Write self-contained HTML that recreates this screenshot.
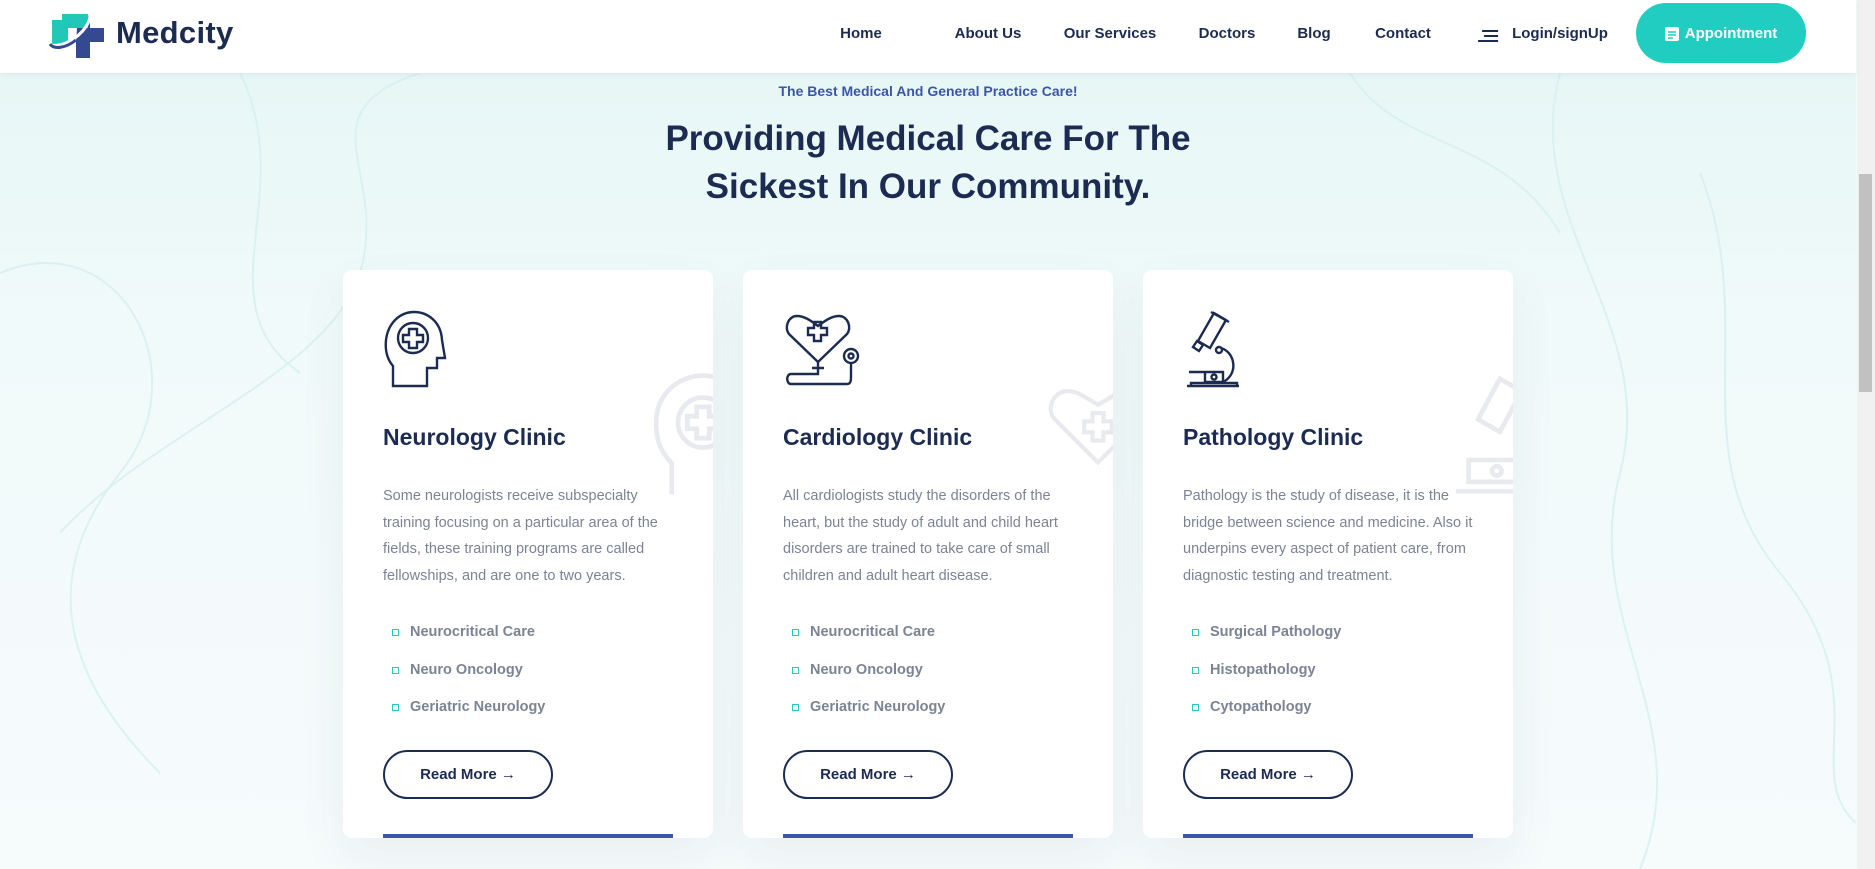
<!DOCTYPE html>
<html><head><meta charset="utf-8">
<style>
*{margin:0;padding:0;box-sizing:border-box}
html,body{width:1875px;height:869px;overflow:hidden}
body{font-family:"Liberation Sans",sans-serif;background:#f3fbfb;position:relative}
.bg{position:absolute;left:0;top:0;width:1856px;height:869px;background:linear-gradient(180deg,#e4f6f5 0%,#f1fafa 40%,#f6fbfc 100%)}
header{position:absolute;left:0;top:0;width:1856px;height:73px;background:#fff;box-shadow:0 2px 6px rgba(0,0,0,.05);z-index:5}
.logo{position:absolute;left:48px;top:10px}
.logotext{position:absolute;left:116px;top:15px;font-size:31px;font-weight:600;color:#1c2b51;letter-spacing:.3px}
nav a{position:absolute;top:25px;font-size:15px;font-weight:700;color:#1c2b51;text-decoration:none;transform:translateX(-50%);white-space:nowrap}
.appt{position:absolute;left:1636px;top:3px;width:170px;height:60px;border-radius:30px;background:#21cdc0;color:#fff;font-weight:700;font-size:15px;display:flex;align-items:center;justify-content:center;gap:6px}
.scroll{position:absolute;left:1857px;top:0;width:18px;height:869px;background:#f1f1f1}
.thumb{position:absolute;left:1859px;top:174px;width:13px;height:218px;background:#c1c1c1}
.sub{position:absolute;top:83px;width:1856px;text-align:center;font-size:14px;font-weight:700;color:#3b56a6}
h1{position:absolute;top:115px;width:1856px;text-align:center;font-size:35px;line-height:48px;font-weight:700;color:#1c2b51}
.card{position:absolute;top:270px;width:370px;height:568px;background:#fff;border-radius:9px;box-shadow:0 20px 50px rgba(30,60,90,.06);overflow:hidden}
.card .ic{position:absolute;left:40px;top:40px}
.card .ghost{position:absolute;right:-40px;top:100px;opacity:1}
.card h3{position:absolute;left:40px;top:154px;font-size:23px;font-weight:700;color:#1c2b51}
.card p{position:absolute;left:40px;top:213px;width:300px;font-size:14.5px;line-height:26.5px;color:#7b8394}
.card ul{position:absolute;left:40px;top:354px;list-style:none}
.card li{font-size:14.5px;font-weight:700;color:#7b8394;height:37.5px;position:relative;padding-left:27px}
.card li:before{content:"";position:absolute;left:9px;top:5px;width:5px;height:5px;border:1px solid #21cdc0}
.btn{position:absolute;left:40px;top:480px;width:170px;height:49px;border:2px solid #1c2b51;border-radius:25px;font-size:15px;font-weight:700;color:#1c2b51;display:flex;align-items:center;justify-content:center}
.bar{position:absolute;left:40px;top:564px;width:290px;height:4px;background:#3b56a6}
</style></head><body>
<div class="bg"></div>
<svg style="position:absolute;left:0;top:73px" width="1856" height="796" fill="none" stroke="#d6f0ee" stroke-width="2" opacity=".8">
<path d="M0 200 C120 150 200 300 120 400 S 60 600 160 700"/>
<path d="M60 460 C150 360 330 300 360 200 S 300 40 420 0"/>
<path d="M1560 0 C1520 150 1660 250 1620 400 S 1700 650 1640 796"/>
<path d="M1700 100 C1760 250 1680 380 1780 500 S 1800 700 1856 750"/>
<path d="M240 0 C300 120 200 230 300 300"/>
<path d="M1350 0 C1400 80 1500 60 1560 160"/>
</svg>
<header>
<svg class="logo" width="58" height="50" viewBox="0 0 58 50">
<path d="M30 4h12v14h14v14H42v16H28V32" fill="#34498f"/>
<path d="M14 4h26v14H14z" fill="#21c7b7"/><path d="M4 10h16v24H4z" fill="#21c7b7"/>
<path d="M40 2c6 6-4 22-20 30-8 4-16 4-18 2" stroke="#fff" stroke-width="3" fill="none"/>
<path d="M2 34c4 6 16 4 26-4" stroke="#34498f" stroke-width="3" fill="none"/>
</svg>
<div class="logotext">Medcity</div>
<nav>
<a style="left:861px">Home</a><a style="left:988px">About Us</a><a style="left:1110px">Our Services</a><a style="left:1227px">Doctors</a><a style="left:1314px">Blog</a><a style="left:1403px">Contact</a>
<a style="left:1543px"><span style="display:inline-block;vertical-align:middle;margin-right:14px;width:20px"><span style="display:block;height:2px;background:#1c2b51;margin:3px 0 3px 4px;width:16px"></span><span style="display:block;height:2px;background:#1c2b51;width:14px;margin:3px 0 3px 6px"></span><span style="display:block;height:2px;background:#1c2b51;width:20px"></span></span>Login/signUp</a>
</nav>
<div class="appt"><svg width="14" height="16" viewBox="0 0 14 16"><rect x="0" y="2" width="14" height="14" rx="2" fill="#fff"/><path d="M3 7h8M3 10h8M3 13h5" stroke="#21cdc0" stroke-width="1.5"/></svg>Appointment</div>
</header>
<div class="sub">The Best Medical And General Practice Care!</div>
<h1>Providing Medical Care For The<br>Sickest In Our Community.</h1>

<div class="card" style="left:343px">
<svg class="ghost" width="100" height="130" viewBox="0 0 64 80" fill="none" stroke="#e8eaef" stroke-width="3"><path d="M12 78V58C4 50 2 42 2 32 2 14 16 2 32 2s28 12 28 30l6 14h-6v12h-8v20"/><circle cx="32" cy="32" r="16"/><path d="M28 22h8v6h6v8h-6v6h-8v-6h-6v-8h6z"/></svg>
<svg class="ic" width="64" height="78" viewBox="0 0 64 78" fill="none" stroke="#1c2b51" stroke-width="2.4"><path d="M10 76V56C4 49 2 40 3 30 5 13 17 2 31 2s27 10 28 28l3 18h-8v10h-10v18z"/><circle cx="30" cy="28" r="15"/><path d="M26 19h8v6h6v7h-6v6h-8v-6h-6v-7h6z"/></svg>
<h3>Neurology Clinic</h3>
<p>Some neurologists receive subspecialty training focusing on a particular area of the fields, these training programs are called fellowships, and are one to two years.</p>
<ul><li>Neurocritical Care</li><li>Neuro Oncology</li><li>Geriatric Neurology</li></ul>
<div class="btn">Read More →</div><div class="bar"></div>
</div>

<div class="card" style="left:743px">
<svg class="ghost" width="110" height="130" viewBox="0 0 80 80" fill="none" stroke="#e8eaef" stroke-width="3"><path d="M40 60L8 28C2 20 8 8 18 8c8 0 14 6 22 10 8-4 14-10 22-10 10 0 16 12 10 20z"/><path d="M36 24h8v6h6v8h-6v6h-8v-6h-6v-8h6z"/></svg>
<svg class="ic" width="80" height="78" viewBox="0 0 80 78" fill="none" stroke="#1c2b51" stroke-width="2.4"><path d="M35 52L6 24C1 18 5 6 14 6c7 0 13 4 21 10 8-6 14-10 21-10 9 0 13 12 8 18z"/><path d="M31 12h7v6h6v7h-6v6h-7v-6h-6v-7h6z"/><path d="M35 52v12H8c-5 0-5 10 0 10h56c4 0 4-4 4-8V52"/><circle cx="68" cy="46" r="7"/><circle cx="68" cy="46" r="2.5"/><path d="M29 58h12"/></svg>
<h3>Cardiology Clinic</h3>
<p>All cardiologists study the disorders of the heart, but the study of adult and child heart disorders are trained to take care of small children and adult heart disease.</p>
<ul><li>Neurocritical Care</li><li>Neuro Oncology</li><li>Geriatric Neurology</li></ul>
<div class="btn">Read More →</div><div class="bar"></div>
</div>

<div class="card" style="left:1143px">
<svg class="ghost" width="100" height="130" viewBox="0 0 64 80" fill="none" stroke="#e8eaef" stroke-width="3"><path d="M30 4l14 8-14 26-14-8z"/><path d="M10 70h30V56H10zM2 76h60"/><circle cx="28" cy="63" r="3"/></svg>
<svg class="ic" width="62" height="78" viewBox="0 0 62 78" fill="none" stroke="#1c2b51" stroke-width="2.4"><path d="M31 3l12 7-16 28-12-7z"/><path d="M28 2l18 10M14 31l6 4-4 6-6-4z"/><circle cx="36" cy="40" r="3"/><path d="M38 38c14 4 18 26 2 34"/><path d="M22 72V62h18v10H22M6 62h16"/><circle cx="31" cy="67" r="2.5"/><path d="M4 76h52M8 76v-3h46v3"/></svg>
<h3>Pathology Clinic</h3>
<p>Pathology is the study of disease, it is the bridge between science and medicine. Also it underpins every aspect of patient care, from diagnostic testing and treatment.</p>
<ul><li>Surgical Pathology</li><li>Histopathology</li><li>Cytopathology</li></ul>
<div class="btn">Read More →</div><div class="bar"></div>
</div>

<div class="scroll"></div><div class="thumb"></div>
</body></html>
